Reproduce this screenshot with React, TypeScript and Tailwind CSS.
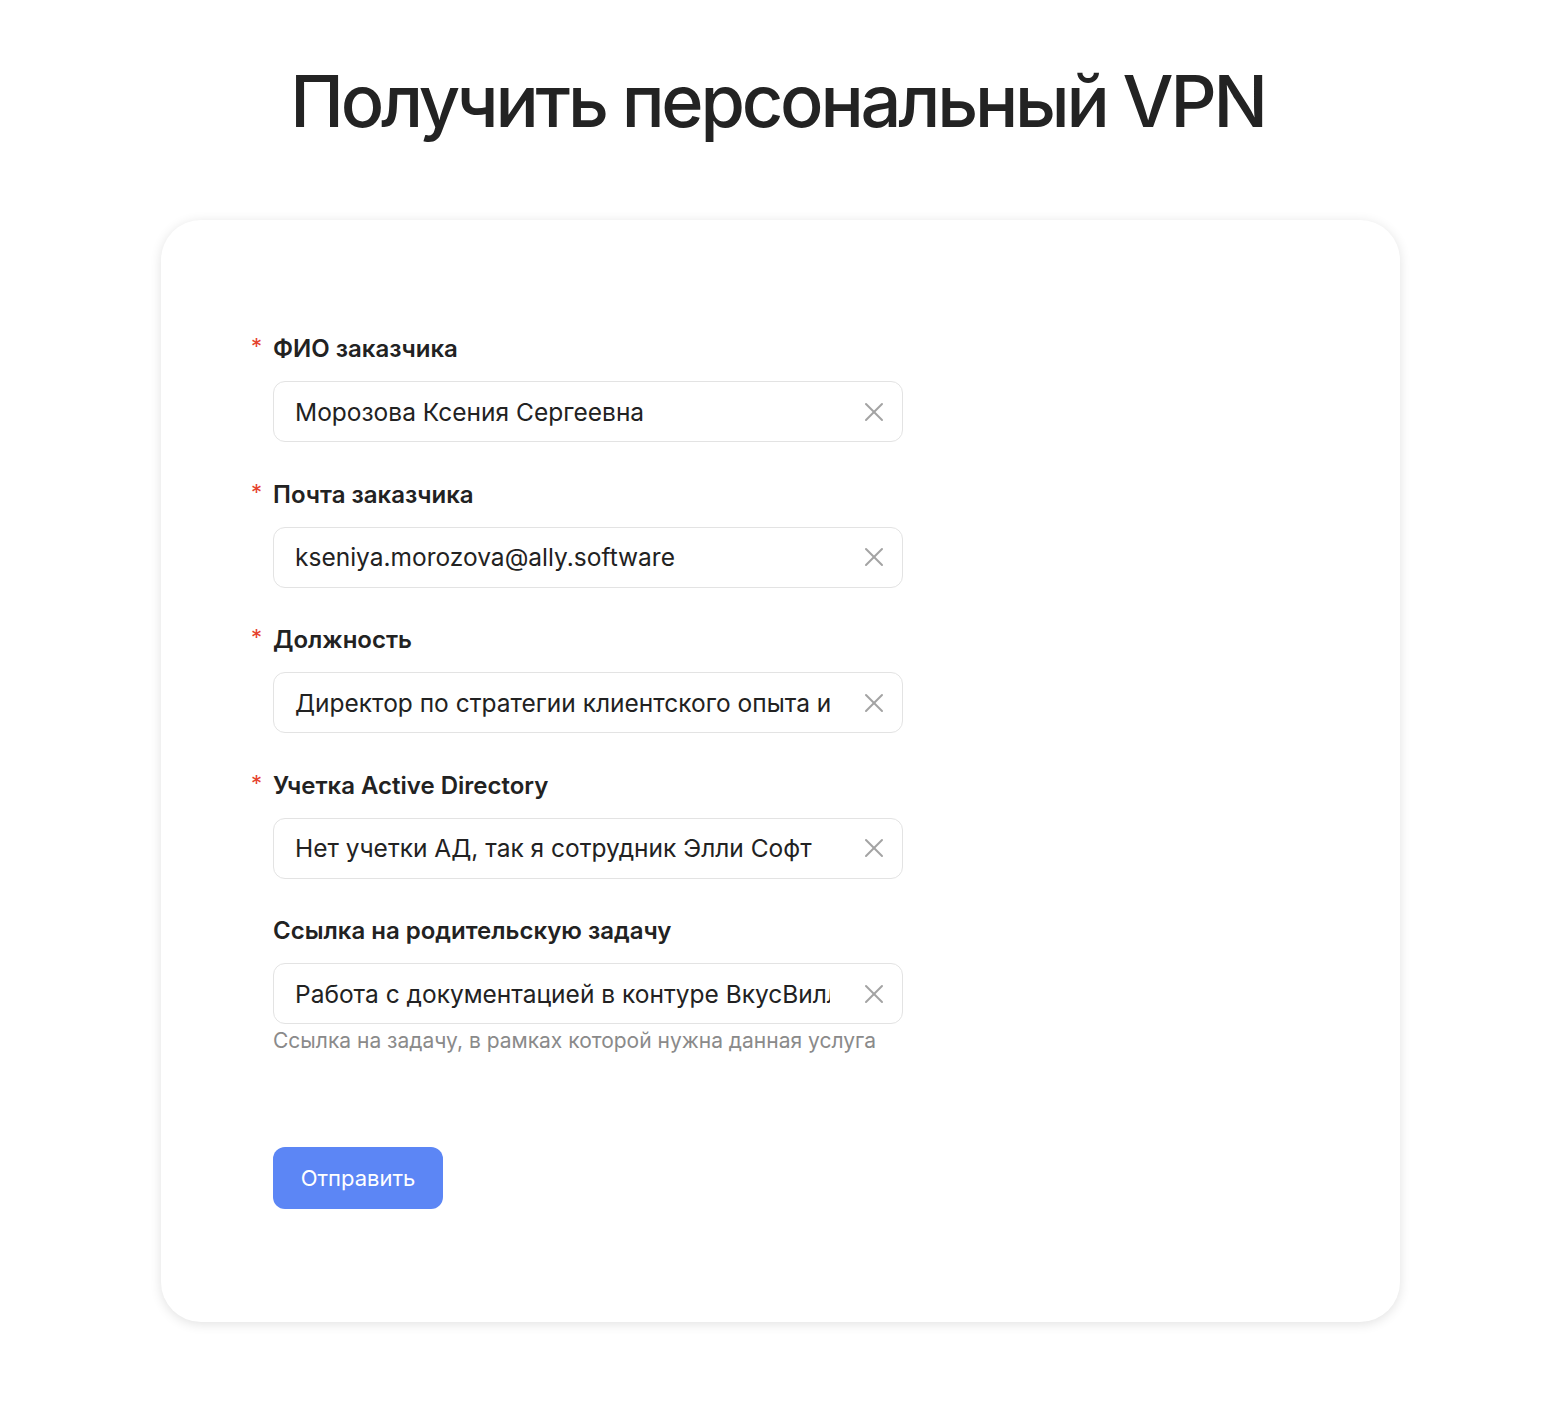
import { X } from "lucide-react";

const fields = [
  { label: "ФИО заказчика", value: "Морозова Ксения Сергеевна", required: true },
  { label: "Почта заказчика", value: "kseniya.morozova@ally.software", required: true },
  {
    label: "Должность",
    value: "Директор по стратегии клиентского опыта и цифровых продуктов",
    required: true,
  },
  {
    label: "Учетка Active Directory",
    value: "Нет учетки АД, так я сотрудник Элли Софт",
    required: true,
  },
  {
    label: "Ссылка на родительскую задачу",
    value: "Работа с документацией в контуре ВкусВилл",
    required: false,
    hint: "Ссылка на задачу, в рамках которой нужна данная услуга",
  },
];

function Field({
  label,
  value,
  required,
  hint,
}: {
  label: string;
  value: string;
  required: boolean;
  hint?: string;
}) {
  return (
    <div className="flex flex-col">
      <div className="relative h-8 leading-8 text-[24px] font-semibold text-[#222]">
        {required && (
          <span className="absolute -left-[22px] top-[-3px] text-[22px] font-normal text-[#e5412d]">*</span>
        )}
        {label}
      </div>
      <div className="relative mt-4 w-[630px] h-[61px] rounded-xl border border-[#e3e3e3] bg-white">
        <input
          readOnly
          value={value}
          className="w-full h-full bg-transparent pl-[21px] pr-[72px] text-[24.5px] text-[#222] outline-none"
        />
        <button className="absolute right-[12px] top-1/2 -translate-y-1/2 text-[#a3a3a3]">
          <X size={32} strokeWidth={1.5} />
        </button>
      </div>
      {hint && (
        <div className="mt-[5px] text-[21px] leading-[24px] text-[#8a8a8a]">{hint}</div>
      )}
    </div>
  );
}

export default function App() {
  return (
    <div className="min-h-screen bg-white pb-[104px] font-['Inter','Noto_Sans',sans-serif]">
      <h1 className="pt-[61px] text-center text-[72px] leading-[80px] font-medium text-[#232323] tracking-[-3.2px]">
        Получить персональный VPN
      </h1>

      <div className="mx-auto mt-[79px] w-[1239px] translate-x-[3px] rounded-[40px] bg-white px-[112px] pt-[113px] pb-[113px] shadow-[0_2px_12px_rgba(0,0,0,0.12)]">
        <div className="flex flex-col gap-[36.5px]">
          {fields.map((f) => (
            <Field key={f.label} {...f} />
          ))}
        </div>

        <button className="mt-[94px] h-[62px] w-[170px] rounded-xl bg-[#5c86f5] text-[22px] text-white">
          Отправить
        </button>
      </div>
    </div>
  );
}
